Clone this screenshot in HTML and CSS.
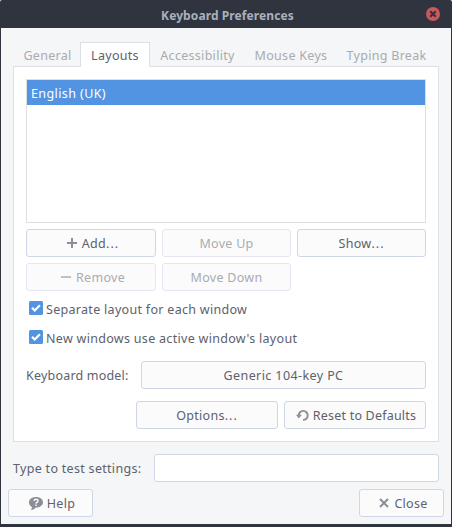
FILE: index.html
```html
<!DOCTYPE html>
<html lang="en">
<head>
<meta charset="utf-8">
<title>Keyboard Preferences</title>
<link rel="stylesheet" href="styles.css">
</head>
<body>
<div class="window">
  <header class="titlebar">
    <h1 class="title">Keyboard Preferences</h1>
    <svg class="close-icon" width="14" height="14" viewBox="0 0 14 14"><circle cx="7" cy="7" r="7" fill="#cc575d"/><path d="M4.2 4.200l5.600 5.600m0-5.600l-5.600 5.600" stroke="#2f343f" stroke-width="2"/></svg>
  </header>
  <main class="content">
    <nav class="tabs">
      <span class="tab general">General</span>
      <span class="tab active">Layouts</span>
      <span class="tab access">Accessibility</span>
      <span class="tab mouse">Mouse Keys</span>
      <span class="tab typing">Typing Break</span>
    </nav>
    <section class="panel">
      <div class="list"><div class="item">English (UK)</div></div>
      <div class="grid">
        <button class="btn with-icon"><svg class="icon" width="12" height="12" viewBox="0 0 12 12"><path d="M6 1v10M1 6h10" stroke="#8b8e98" stroke-width="2"/></svg><span>Add<span class="dots">...</span></span></button>
        <button class="btn off">Move Up</button>
        <button class="btn"><span>Show<span class="dots">...</span></span></button>
        <button class="btn off with-icon"><svg class="icon" width="12" height="12" viewBox="0 0 12 12"><path d="M1 6h10" stroke="#c0c1c6" stroke-width="2"/></svg><span>Remove</span></button>
        <button class="btn off">Move Down</button>
      </div>
      <div class="check first"><svg width="14" height="14" viewBox="0 0 14 14"><rect width="14" height="14" rx="1.5" fill="#5294e2"/><path d="M3 6.800l2.700 2.700 5.200-5.200" fill="none" stroke="#fff" stroke-width="2.200"/></svg><span>Separate layout for each window</span></div>
      <div class="check"><svg width="14" height="14" viewBox="0 0 14 14"><rect width="14" height="14" rx="1.5" fill="#5294e2"/><path d="M3 6.800l2.700 2.700 5.200-5.200" fill="none" stroke="#fff" stroke-width="2.200"/></svg><span>New windows use active window's layout</span></div>
      <div class="row model"><span class="label">Keyboard model:</span><button class="btn">Generic 104-key PC</button></div>
      <div class="row actions">
        <button class="btn"><span>Options<span class="dots">...</span></span></button>
        <button class="btn with-icon reset"><svg class="icon" width="13" height="12" viewBox="0 0 13 12"><path d="M2.700 6.500A4.500 4.500 0 1 1 7 10.900" fill="none" stroke="#8b8e98" stroke-width="1.900"/><path d="M0 5.800h5.800L2.800 9.400z" fill="#8b8e98"/></svg><span>Reset to Defaults</span></button>
      </div>
    </section>
    <div class="row test"><label class="label" for="test">Type to test settings:</label><input id="test" class="entry" type="text"></div>
    <footer class="footer">
      <button class="btn with-icon"><svg class="icon" width="14" height="13" viewBox="0 0 14 13"><path d="M7 0c4 0 7 2.200 7 5.300s-3 5.300-7 5.300C5.500 12.200 4 13 1.700 13c1-.9 1.300-1.800 1.100-3.100C1 9 0 7.400 0 5.300 0 2.200 3 0 7 0z" fill="#8b8e98"/><path d="M5 3.900c.2-2.200 4.100-2.200 4 0C9 5.200 7 5.100 7 6.700M7 7.600v1.500" fill="none" stroke="#fbfbfc" stroke-width="1.400"/></svg><span>Help</span></button>
      <button class="btn with-icon"><svg class="icon" width="12" height="12" viewBox="0 0 12 12"><path d="M2 2l8 8M10 2l-8 8" stroke="#8b8e98" stroke-width="2"/></svg><span>Close</span></button>
    </footer>
  </main>
</div>
</body>
</html>
```
FILE: styles.css
```css
* { box-sizing: border-box; }
body { margin: 0; font: 12.5px/18px "Noto Sans", sans-serif; color: #5c616c; letter-spacing: 0.3px; white-space: nowrap; }
.window { width: 452px; height: 527px; background: #2f343f; border-radius: 2px 2px 0 0; }
.titlebar { height: 28px; display: flex; align-items: center; justify-content: flex-end; padding: 0 12px 0 14px; }
.title { flex: 1; margin: 4px 0 0 15px; text-align: center; font-size: 12px; line-height: 18px; font-weight: 700; letter-spacing: 0.1px; color: #a9b0be; }
.close-icon { display: block; }
.content { margin: 0 1px; height: 496px; background: #f5f6f7; padding: 14px 7px 0; }
.tabs { display: flex; height: 25px; margin: 0 5px; position: relative; z-index: 1; color: #a8abb1; }
.tab { width: 67px; padding: 4px 0 0 2px; text-align: center; border: solid transparent; border-width: 1px 1px 0; }
.tab.active { width: 70px; padding-left: 0; background: #fff; border-color: #dcdfe3; color: #5c616c; }
.tab.access { width: 93px; }
.tab.mouse { width: 94px; }
.tab.typing { width: 97px; }
.panel { margin: -1px 5px 0; height: 376px; padding: 12px; background: #fff; border: 1px solid #dcdfe3; }
.list { height: 144px; border: 1px solid #dcdfe3; }
.item { height: 25px; padding: 5px 4px 0; background: #5294e2; color: #fff; letter-spacing: 0.4px; }
.grid { display: grid; grid-template-columns: 130px 129px 129px; gap: 6px; margin-top: 6px; }
.btn { height: 28px; display: flex; align-items: center; justify-content: center; gap: 4px; padding: 2px 0 0; font: inherit; color: inherit; letter-spacing: inherit; background: #fbfbfc; border: 1px solid #cfd6e6; border-radius: 3px; }
.btn.off { color: #a8abb1; border-color: #e5e8f2; }
.btn.with-icon { padding-left: 3px; }
.btn.reset { padding-left: 2px; letter-spacing: 0.2px; }
.icon { margin-top: -2px; }
.dots { letter-spacing: 1px; }
.check { display: flex; gap: 3px; height: 18px; margin: 11px 0 0 3px; }
.check.first { margin-top: 10px; }
.row { display: flex; }
.label { padding-top: 6px; }
.model { margin-top: 13px; justify-content: space-between; }
.model .label { letter-spacing: 0.2px; }
.model .btn { width: 285px; letter-spacing: 0.4px; }
.actions { justify-content: flex-end; gap: 6px; margin-top: 12px; }
.actions .btn { width: 142px; }
.test { margin: 12px 5px 0; justify-content: space-between; }
.entry { width: 285px; height: 28px; background: #fff; border: 1px solid #cfd6e6; border-radius: 3px; }
.footer { display: flex; justify-content: space-between; margin-top: 7px; }
.footer .btn { width: 85px; }
```
